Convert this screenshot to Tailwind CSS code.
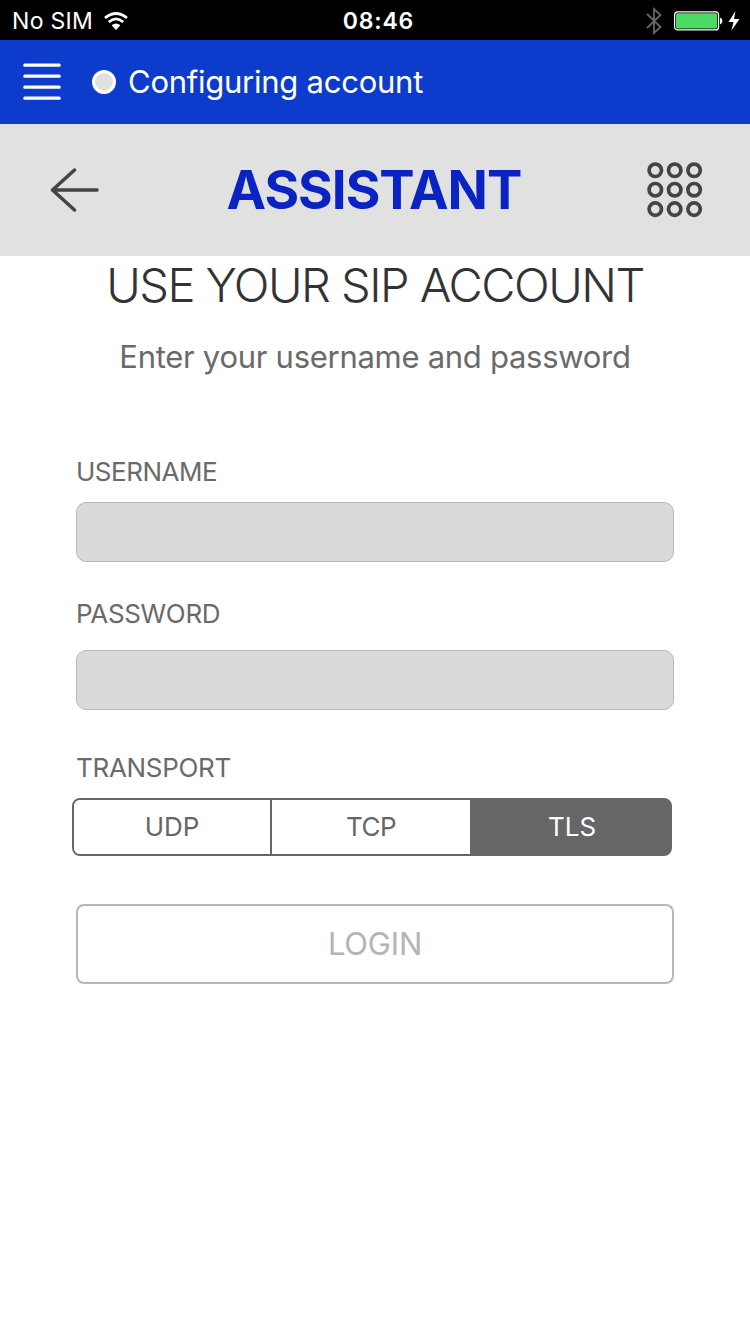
<!DOCTYPE html>
<html lang="en">
<head>
  <meta charset="UTF-8" />
  <meta name="viewport" content="width=device-width, initial-scale=1.0"/>
  <title>Assistant</title>
  <script src="https://cdn.jsdelivr.net/npm/@tailwindcss/browser@4"></script>
</head>
<body class="bg-white font-[Inter,sans-serif] text-[#6a6a6a]">
  <!-- Status bar -->
  <div class="h-10 bg-black text-white text-[23px] grid grid-cols-3 items-center pl-3 pr-2 leading-[42px]">
    <div class="flex items-center gap-[11px]">
      <span class="whitespace-nowrap tracking-[0.3px]">No SIM</span>
      <svg class="w-6 h-[18px]" viewBox="0 0 24 18" fill="none" stroke="#fff" stroke-width="2.8">
        <path d="M1 6Q12-3 23 6" />
        <path d="M4.8 10Q12 3.7 19.2 10" />
        <path d="M12 18 7.6 13.2Q12 9.8 16.4 13.2Z" fill="#fff" stroke="none" />
      </svg>
    </div>
    <span class="pl-[3px] text-center font-semibold tracking-[0.8px]">08:46</span>
    <div class="flex items-center justify-end">
      <svg class="w-4 h-7 mr-3" viewBox="0 0 16 28" fill="none" stroke="#666" stroke-width="1.8">
        <path d="M1 7 14.5 20 8 26V2l6.5 6L1 21" />
      </svg>
      <svg class="w-[68px] h-5" viewBox="0 0 68 20">
        <rect x=".6" y=".9" width="44" height="18" rx="3" fill="#000" stroke="#fff" stroke-width="1.2" />
        <rect x="2" y="2.3" width="41.2" height="15.2" rx="1.5" fill="#4cd964" />
        <path d="M46 6.5q2.5.8 2.5 3.5t-2.5 3.5Z" fill="#fff" />
        <path d="M61.5 0 54.5 11h5l-2 8.5L65.5 8h-5.5Z" fill="#fff" />
      </svg>
    </div>
  </div>

  <!-- Account state -->
  <header class="h-[84px] bg-[#0d3ccd] text-white flex items-center pl-[23px]">
    <svg class="w-[38px] h-[38px]" viewBox="0 0 38 38" stroke="#fff" stroke-width="3.2" stroke-linecap="round">
      <path d="M1.8 2.2h34.4M1.8 13.2h34.4M1.8 24.2h34.4M1.8 35.2h34.4" />
    </svg>
    <span class="ml-[31px] size-6 rounded-full border-[3px] border-white bg-[#e1e1e1]"></span>
    <span class="ml-3 pt-px text-[31px] tracking-[-0.25px]">Configuring account</span>
  </header>

  <!-- Title bar -->
  <nav class="h-[132px] bg-[#e1e1e1] flex items-center justify-between pl-[50px] pr-[47px]">
    <svg class="w-[50px] h-11" viewBox="0 0 50 44" fill="none" stroke="#444" stroke-width="3.5" stroke-linecap="round" stroke-linejoin="round">
      <path d="M24.5 2 2.5 22l22 20M2.5 22H47" />
    </svg>
    <h1 class="pt-0.5 pl-px text-[53px] font-bold tracking-[-1px] text-[#0a24c3]">ASSISTANT</h1>
    <svg class="w-14 h-14" viewBox="0 0 56 56" fill="none" stroke="#444" stroke-width="3.7">
      <circle cx="8.3" cy="8.3" r="6.2" /><circle cx="27.7" cy="8.3" r="6.2" /><circle cx="47.1" cy="8.3" r="6.2" />
      <circle cx="8.3" cy="27.7" r="6.2" /><circle cx="27.7" cy="27.7" r="6.2" /><circle cx="47.1" cy="27.7" r="6.2" />
      <circle cx="8.3" cy="47.1" r="6.2" /><circle cx="27.7" cy="47.1" r="6.2" /><circle cx="47.1" cy="47.1" r="6.2" />
    </svg>
  </nav>

  <!-- Login form -->
  <main class="px-[76px] text-[26px]">
    <h2 class="h-[60px] -mx-5 text-center whitespace-nowrap text-[47px] leading-[58px] font-light tracking-[-1.5px] text-[#333]">USE YOUR SIP ACCOUNT</h2>
    <p class="mt-5 h-11 text-center whitespace-nowrap text-[31px] leading-[42px] tracking-[-0.28px]">Enter your username and password</p>

    <label class="mt-[76px] block h-8 leading-8 tracking-[-0.5px]" for="username">USERNAME</label>
    <input id="username" type="text" class="mt-[14px] block w-full h-[60px] rounded-[10px] border border-[#b8b8b8] bg-[#dadada]" />

    <label class="mt-9 block h-8 leading-8 tracking-[-0.35px]" for="password">PASSWORD</label>
    <input id="password" type="password" class="mt-5 block w-full h-[60px] rounded-[10px] border border-[#b8b8b8] bg-[#dadada]" />

    <p class="mt-[42px] h-8 leading-8 tracking-[-0.3px]">TRANSPORT</p>
    <div class="-ml-1 mt-[14px] w-[600px] h-[58px] grid grid-cols-[198px_198px_200px] overflow-hidden rounded-lg border-2 border-[#666] bg-[linear-gradient(to_right,#fff_50%,#666_50%)] leading-[54px] text-[#666]">
      <button class="border-r-2 border-[#666] bg-white pb-0.5">UDP</button>
      <button class="bg-white pb-0.5 tracking-[-0.5px]">TCP</button>
      <button class="bg-[#666] pb-0.5 pl-1 text-white">TLS</button>
    </div>

    <button class="mt-12 block w-full h-20 rounded-lg border-2 border-[#b8b8b8] text-[31px] tracking-[-0.2px] text-[#b4b4b4]">LOGIN</button>
  </main>
</body>
</html>
